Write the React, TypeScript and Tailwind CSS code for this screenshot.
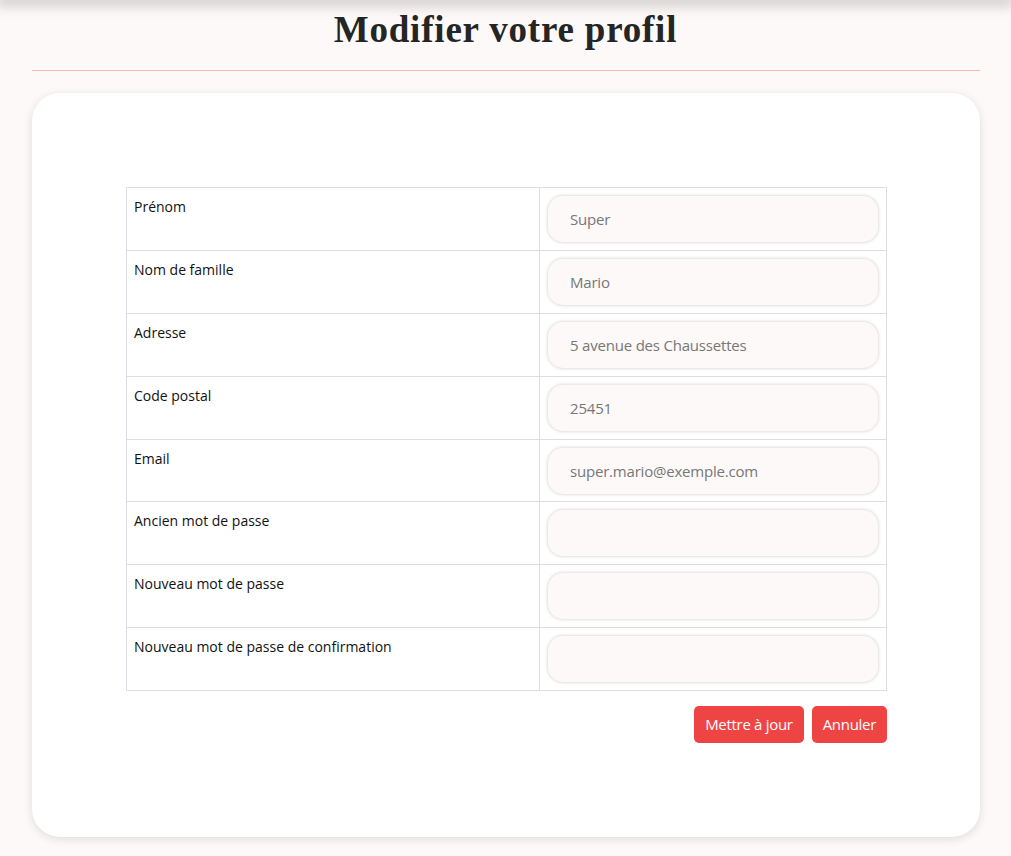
const fields = [
  { label: "Prénom", value: "Super" },
  { label: "Nom de famille", value: "Mario" },
  { label: "Adresse", value: "5 avenue des Chaussettes" },
  { label: "Code postal", value: "25451" },
  { label: "Email", value: "super.mario@exemple.com" },
  { label: "Ancien mot de passe", value: "", type: "password" },
  { label: "Nouveau mot de passe", value: "", type: "password" },
  { label: "Nouveau mot de passe de confirmation", value: "", type: "password" },
];

export default function App() {
  return (
    <div className="min-h-[856px] bg-[#fdf9f8] font-['Open_Sans',sans-serif] text-[#111]">
      {/* navbar shadow peeking from above */}
      <div className="h-0 shadow-[0_0_14px_4px_rgba(0,0,0,0.28)]" />

      <h1 className="pt-[8px] text-center font-['Liberation_Serif',serif] text-[37px] font-bold leading-[44px] text-[#252525] tracking-[0.8px]">
        Modifier votre profil
      </h1>

      <div className="ml-[32px] mr-[31px] mt-[18px] border-t border-[#ffb3b3]" />

      <div className="ml-[32px] mr-[31px] mt-[22px] rounded-[28px] bg-white pl-[94px] pr-[93px] pt-[94px] pb-[94px] shadow-[0_2px_10px_rgba(0,0,0,0.12)]">
        <table className="w-full border-collapse text-[14px]">
          <tbody>
            {fields.map((f) => (
              <tr key={f.label} className="h-[62.9px]">
                <td className="w-[413px] border border-[#dedde3] px-[7px] pt-[9px] align-top leading-[20px]">
                  {f.label}
                </td>
                <td className="border border-[#dedde3] px-[8px] align-middle">
                  <input
                    type={f.type ?? "text"}
                    defaultValue={f.value}
                    className="block h-[46px] w-full rounded-[15px] bg-[#fdf9f8] px-[22px] text-[15px] tracking-[-0.2px] text-[#777] outline-none shadow-[0_0_3px_1px_rgba(0,0,0,0.13)]"
                  />
                </td>
              </tr>
            ))}
          </tbody>
        </table>

        <div className="mt-[15px] flex justify-end gap-[8px]">
          <button className="h-[37px] rounded-[5px] bg-[#ef4444] px-[11px] text-[15px] tracking-[-0.3px] text-white">
            Mettre à jour
          </button>
          <button className="h-[37px] rounded-[5px] bg-[#ef4444] px-[11px] text-[15px] tracking-[-0.3px] text-white">
            Annuler
          </button>
        </div>
      </div>
    </div>
  );
}
